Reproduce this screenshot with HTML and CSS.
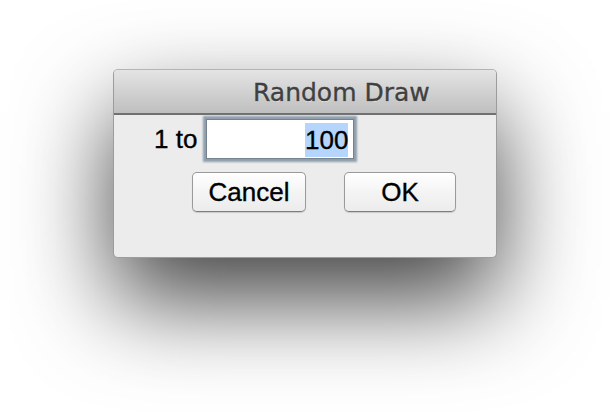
FILE: index.html
```html
<!DOCTYPE html>
<html lang="en">
<head>
    <meta charset="UTF-8">
    <title>Random Draw</title>
    <link rel="stylesheet" href="styles.css">
</head>
<body>
    <div class="window">
        <div class="titlebar">Random Draw</div>
        <div class="content">
            <div class="row">
                <span class="label">1 to</span>
                <div class="field"><span class="sel">100</span></div>
            </div>
            <div class="buttons">
                <button type="button" class="btn btn-cancel">Cancel</button>
                <button type="button" class="btn btn-ok">OK</button>
            </div>
        </div>
    </div>
</body>
</html>
```
FILE: styles.css
```css
body {
    margin: 0;
    padding: 69px 0 0 113px;
    background: #fff;
    font-family: "Liberation Sans", Arial, sans-serif;
    height: 416px;
    box-sizing: border-box;
    overflow: hidden;
}

.window {
    width: 384px;
    height: 189px;
    box-sizing: border-box;
    border: 1px solid #9c9c9c;
    border-top-color: #b4b4b4;
    border-radius: 5px;
    background: #ececec;
    box-shadow: 0 42px 95px rgba(0, 0, 0, 0.74);
    overflow: hidden;
}

.titlebar {
    height: 40px;
    padding: 3px 0 0 139px;
    background: linear-gradient(#e4e4e4, #bfbfbf);
    border-bottom: 2px solid #707070;
    font-family: "DejaVu Sans", sans-serif;
    font-size: 25px;
    line-height: 40px;
    color: #404040;
    -webkit-text-stroke: 0.35px #404040;
    text-shadow: 0 1px 0 rgba(255, 255, 255, 0.5);
}

.content {
    padding: 5px 0 0 40px;
}

.row {
    display: flex;
    align-items: flex-start;
    gap: 10px;
}

.label {
    font-size: 26px;
    line-height: 38px;
    color: #000;
    -webkit-text-stroke: 0.35px #000;
}

.field {
    width: 146px;
    height: 38px;
    box-sizing: border-box;
    padding: 3px 5px 0 0;
    background: #fff;
    text-align: right;
    box-shadow: 0 0 0 1px #76838f, 0 0 2px 4px #8f9eac;
}

.sel {
    display: inline-block;
    height: 34px;
    line-height: 34px;
    font-size: 26px;
    color: #000;
    -webkit-text-stroke: 0.35px #000;
    background: #b5d5fd;
}

.buttons {
    display: flex;
    gap: 38px;
    padding: 14px 0 0 38px;
}

.btn {
    height: 40px;
    box-sizing: border-box;
    padding: 0;
    border: 1px solid #9a9a9a;
    border-bottom-color: #7d7d7d;
    border-radius: 5px;
    background: linear-gradient(#ffffff, #f4f4f4 50%, #ececec);
    box-shadow: 0 1px 1px rgba(0, 0, 0, 0.15);
    font-family: "Liberation Sans", Arial, sans-serif;
    font-size: 26px;
    line-height: 38px;
    color: #000;
    -webkit-text-stroke: 0.35px #000;
}

.btn-cancel {
    width: 114px;
}

.btn-ok {
    width: 112px;
}
```
